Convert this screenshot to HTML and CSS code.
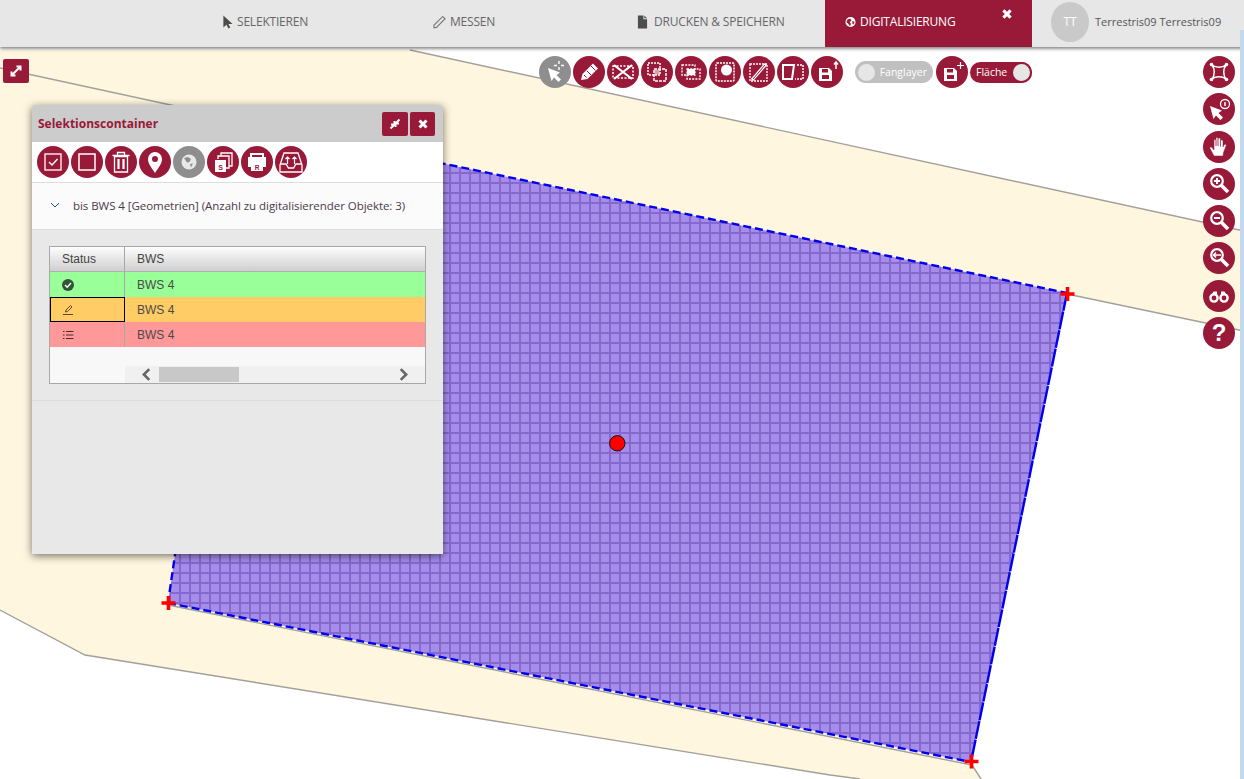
FILE: index.html
```html
<!DOCTYPE html>
<html lang="de">
<head>
<meta charset="utf-8">
<title>Digitalisierung</title>
<link rel="stylesheet" href="styles.css">
</head>
<body>
<div class="app">
  <svg class="map" viewBox="0 0 1244 779" width="1244" height="779">
    <defs>
      <pattern id="hatch" width="10" height="10" patternUnits="userSpaceOnUse" patternTransform="translate(1 4)">
        <rect width="10" height="10" fill="#a68de9"/>
        <rect x="8" width="2.2" height="10" fill="#8569cf"/>
        <rect y="8" width="10" height="2.2" fill="#8569cf"/>
      </pattern>
    </defs>
    <path d="M0 50H410L1244 231V331L1067 294L972 765L981 779H860L830 775L85 655L0 610Z" fill="#fff6df"/>
    <path d="M410 50L1244 231M1244 331L1067 294M168 605L972 765L981 779M860 779L830 775L85 655L0 610M0 68L240 120" fill="none" stroke="#a3a09a" stroke-width="1.400"/>
    <path d="M238 121L1067 293L971 762L168 603Z" fill="url(#hatch)"/>
    <path d="M238 121L1067 293M168 603L971 762M238 121L168 603" fill="none" stroke="#0000ee" stroke-width="2.400" stroke-dasharray="8 4"/>
    <path d="M1067 293L971 762" fill="none" stroke="#0000ee" stroke-width="2.400" stroke-dasharray="18 1"/>
    <circle cx="617.3" cy="443.3" r="7.7" fill="#f00" stroke="#111" stroke-width="1"/>
    <path d="M1060.500 294H1074.500M1067.500 287V301M161.500 603H175.500M168.500 596V610M964.500 761.500H978.500M971.500 754.500V768.500" fill="none" stroke="#f00" stroke-width="3.600"/>
  </svg>

  <header class="topbar">
    <nav class="tabs">
      <a class="tab tab-sel">
        <svg class="tab-ic" viewBox="0 0 12 14"><path d="M1.500 0V13L4.800 10L7 14L9 13L7 9.200H11.500Z" fill="#4d4d4d"/></svg>
        SELEKTIEREN</a>
      <a class="tab tab-mes">
        <svg class="tab-ic tab-ic-wide" viewBox="0 0 14 14"><path d="M1 10.500L10.500 1L13 3.500L3.500 13L1 13Z" fill="none" stroke="#777" stroke-width="1.200"/></svg>
        MESSEN</a>
      <a class="tab tab-dru">
        <svg class="tab-ic" viewBox="0 0 12 14"><path d="M1 0H7V4H11V14H1ZM8 0L11 3H8Z" fill="#4d4d4d"/></svg>
        DRUCKEN &amp; SPEICHERN</a>
      <a class="tab tab-active">
        <svg class="tab-ic" viewBox="0 0 12 12"><circle cx="6" cy="6" r="5.500" fill="#fff"/><path d="M3 3L6 2.500L7 4.500L5 6L6.500 8L5.500 10.500L3.500 8L1.500 6ZM8 5L10.500 6L9 9L8 7.500Z" fill="#981a38"/></svg>
        DIGITALISIERUNG
        <svg class="tab-close" viewBox="0 0 10 10"><path d="M2 2L8 8M8 2L2 8" stroke="#fff" stroke-width="2.600"/></svg>
      </a>
    </nav>
    <div class="user">
      <span class="avatar">TT</span>
      <span class="user-name">Terrestris09 Terrestris09</span>
    </div>
  </header>

  <button class="square-btn map-expand">
    <svg viewBox="0 0 14 14"><path d="M3 11L11 3M7.500 2.500H11.500V6.500M2.500 7.500V11.500H6.500" fill="none" stroke="#fff" stroke-width="2"/></svg>
  </button>

  <div class="draw-tools">
    <button class="round grey"><svg viewBox="0 0 32 32"><path d="M9 12L12.500 25L15 21.500L19.500 26L22 23.500L17.500 19L21 16.500Z" fill="#fff"/><path d="M20 5V8M20 11V14M15 9.500H18M22 9.500H25" stroke="#fff" stroke-width="1.400"/></svg></button>
    <button class="round"><svg viewBox="0 0 32 32"><path d="M8 24L9.500 18L20 7.500L25 12.500L14.500 23Z" fill="#fff"/><path d="M18 10L22.500 14.500M11 19L13.500 21.500M14 15L18 19" stroke="#981a38" stroke-width="1"/></svg></button>
    <button class="round"><svg viewBox="0 0 32 32"><rect x="6" y="10" width="20" height="12" fill="none" stroke="#fff" stroke-width="1.500" stroke-dasharray="2 1.500"/><path d="M7 9L25 23M25 9L7 23" stroke="#fff" stroke-width="2.200"/></svg></button>
    <button class="round"><svg viewBox="0 0 32 32"><rect x="7" y="7" width="12" height="12" fill="none" stroke="#fff" stroke-width="1.500" stroke-dasharray="2 1"/><rect x="13" y="13" width="12" height="12" fill="none" stroke="#fff" stroke-width="1.500" stroke-dasharray="3 1"/><rect x="13.500" y="13.500" width="5" height="5" fill="#fff" opacity=".6"/></svg></button>
    <button class="round"><svg viewBox="0 0 32 32"><rect x="7" y="9" width="13" height="10" fill="none" stroke="#fff" stroke-width="1.300" stroke-dasharray="2 1.200"/><rect x="12" y="13" width="13" height="10" fill="none" stroke="#fff" stroke-width="1.300" stroke-dasharray="2 1.200"/><rect x="12" y="13" width="8" height="6" fill="#fff"/></svg></button>
    <button class="round"><svg viewBox="0 0 32 32"><rect x="7" y="7" width="18" height="18" rx="1" fill="none" stroke="#fff" stroke-width="1.500" stroke-dasharray="2 1"/><circle cx="17.500" cy="14" r="5.500" fill="#fff"/></svg></button>
    <button class="round"><svg viewBox="0 0 32 32"><rect x="7" y="8" width="17" height="17" fill="none" stroke="#fff" stroke-width="1.300" stroke-dasharray="2 1"/><path d="M9 24L23 8" stroke="#fff" stroke-width="3.200"/><path d="M10 23L22 9" stroke="#981a38" stroke-width="1"/></svg></button>
    <button class="round"><svg viewBox="0 0 32 32"><path d="M6 9H17L15 23H6Z" fill="none" stroke="#fff" stroke-width="2"/><path d="M20 9H26V23H18" fill="none" stroke="#fff" stroke-width="1.500" stroke-dasharray="2 1"/></svg></button>
    <button class="round"><svg viewBox="0 0 32 32"><path d="M8 12H18L21 15V25H8Z" fill="#fff"/><rect x="11" y="13" width="6" height="3.500" fill="#981a38"/><rect x="11" y="19" width="7" height="4" fill="#981a38"/><path d="M25 6V13M23 8.500L25 6L27 8.500" fill="none" stroke="#fff" stroke-width="1.500"/></svg></button>
    <div class="toggle toggle-off"><span class="knob"></span><span>Fanglayer</span></div>
    <button class="round"><svg viewBox="0 0 32 32"><path d="M8 12H18L21 15V25H8Z" fill="#fff"/><rect x="11" y="13" width="6" height="3.500" fill="#981a38"/><rect x="11" y="19" width="7" height="4" fill="#981a38"/><path d="M24.500 6V13M21 9.500H28" stroke="#fff" stroke-width="1.200"/></svg></button>
    <div class="toggle toggle-on"><span>Fläche</span><span class="knob"></span></div>
  </div>

  <div class="nav-tools">
    <button class="round"><svg viewBox="0 0 32 32"><path d="M9 9C13 12 19 12 23 9C20 13 20 19 23 23C19 20 13 20 9 23C12 19 12 13 9 9Z" fill="none" stroke="#fff" stroke-width="1.500"/><g fill="#fff"><circle cx="8.500" cy="8.500" r="1.800"/><circle cx="23.500" cy="8.500" r="1.800"/><circle cx="8.500" cy="23.500" r="1.800"/><circle cx="23.500" cy="23.500" r="1.800"/></g></svg></button>
    <button class="round"><svg viewBox="0 0 32 32"><path d="M7 13L10.500 26L13 22.500L17.500 27L20 24.500L15.500 20L19 17.500Z" fill="#fff"/><circle cx="22" cy="11" r="4.500" fill="none" stroke="#fff" stroke-width="1.300"/><path d="M22 9V13" stroke="#fff" stroke-width="1.500"/></svg></button>
    <button class="round"><svg viewBox="0 0 32 32"><path d="M11 25L7 17.500C6.500 16 8 15.500 9 16.500L11 19V9.500C11 8 13 8 13 9.500V15V7.500C13 6 15 6 15 7.500V15V8C15 6.500 17.500 6.500 17.500 8V15.500V10C17.500 8.500 20 8.500 20 10V16L21 14C22 12.500 24 13.500 23 15L20.500 21.500L20 25Z" fill="#fff" stroke="#981a38" stroke-width=".5"/></svg></button>
    <button class="round"><svg viewBox="0 0 32 32"><circle cx="14" cy="13" r="5.800" fill="none" stroke="#fff" stroke-width="2.200"/><path d="M18.500 17.500L25 24" stroke="#fff" stroke-width="3.600"/><path d="M11 13H17M14 10V16" stroke="#fff" stroke-width="2"/></svg></button>
    <button class="round"><svg viewBox="0 0 32 32"><circle cx="14" cy="13" r="5.800" fill="none" stroke="#fff" stroke-width="2.200"/><path d="M18.500 17.500L25 24" stroke="#fff" stroke-width="3.600"/><path d="M11 13H17" stroke="#fff" stroke-width="2"/></svg></button>
    <button class="round"><svg viewBox="0 0 32 32"><circle cx="14" cy="13" r="5.800" fill="none" stroke="#fff" stroke-width="2.200"/><path d="M18.500 17.500L25 24" stroke="#fff" stroke-width="3.600"/><path d="M10.500 13H18M13 10.500L10.500 13L13 15.500" fill="none" stroke="#fff" stroke-width="1.500"/></svg></button>
    <button class="round"><svg viewBox="0 0 32 32"><circle cx="11" cy="18" r="3.600" fill="none" stroke="#fff" stroke-width="2.400"/><circle cx="21" cy="18" r="3.600" fill="none" stroke="#fff" stroke-width="2.400"/><path d="M8.500 15L10.500 11.500H14V15H18V11.500H21.500L23.500 15Z" fill="#fff"/></svg></button>
    <button class="round help">?</button>
  </div>

  <section class="panel">
    <div class="panel-head">
      <h2 class="panel-title">Selektionscontainer</h2>
      <button class="square-btn">
        <svg viewBox="0 0 14 14"><path d="M2.500 11.500L6 8M8 6L11.500 2.500M6.500 4V7.500H3M7.500 10V6.500H11" fill="none" stroke="#fff" stroke-width="2"/></svg>
      </button>
      <button class="square-btn">
        <svg viewBox="0 0 14 14"><path d="M3.500 3.500L10.500 10.500M10.500 3.500L3.500 10.500" stroke="#fff" stroke-width="3"/></svg>
      </button>
    </div>
    <div class="panel-tools">
      <button class="round"><svg viewBox="0 0 32 32"><rect x="8" y="8" width="16" height="16" fill="none" stroke="#fff" stroke-width="1.300"/><path d="M12 16L15 19L20.500 13" fill="none" stroke="#fff" stroke-width="1.400"/></svg></button>
      <button class="round"><svg viewBox="0 0 32 32"><rect x="8" y="8" width="16" height="16" fill="none" stroke="#fff" stroke-width="1.500"/></svg></button>
      <button class="round"><svg viewBox="0 0 32 32"><path d="M9.500 10.500H22.500V26H9.500ZM7.500 9.500H24.500M12.500 9V6.500H19.500V9" fill="none" stroke="#fff" stroke-width="1.300"/><path d="M13.500 13V23M18.500 13V23" stroke="#fff" stroke-width="2.200"/></svg></button>
      <button class="round"><svg viewBox="0 0 32 32"><path fill-rule="evenodd" d="M16 27C12 21 9 17.500 9 13A7 7 0 0 1 23 13C23 17.500 20 21 16 27ZM16 10A3 3 0 1 0 16 16A3 3 0 1 0 16 10Z" fill="#fff"/></svg></button>
      <button class="round grey"><svg viewBox="0 0 32 32"><circle cx="16" cy="16" r="7.500" fill="#e8e8e8"/><path d="M11 12L15 11L18 13L16.500 16L14 16.500ZM17 18L20 17.500L18 21.500Z" fill="#8e8e8e"/></svg></button>
      <button class="round"><svg viewBox="0 0 32 32"><path d="M14 10V7H25V20H22" fill="none" stroke="#fff" stroke-width="1.300"/><path d="M11 13V10H22V22H19" fill="none" stroke="#fff" stroke-width="1.300"/><rect x="8" y="14" width="11" height="12" fill="#fff"/><text class="mini" x="13.500" y="23.500">S</text></svg></button>
      <button class="round"><svg viewBox="0 0 32 32"><path d="M10 12V8H22V12" fill="none" stroke="#fff" stroke-width="2"/><path d="M7 11H25V21H22V25H10V21H7Z" fill="#fff"/><text class="mini mini-red" x="16" y="23.500">R</text></svg></button>
      <button class="round"><svg viewBox="0 0 32 32"><path d="M9 7H23L27 19V26H5V19Z" fill="none" stroke="#fff" stroke-width="1.300"/><path d="M6 18H11L13.500 22H18.500L21 18H26" fill="none" stroke="#fff" stroke-width="1.300"/><path d="M12.500 18V11M10.500 13L12.500 11L14.500 13M19.500 11V18M17.500 13L19.500 11L21.500 13" fill="none" stroke="#fff" stroke-width="1.200"/></svg></button>
    </div>
    <div class="acc-head">
      <svg class="chev" viewBox="0 0 10 6"><path d="M1 1L5 5L9 1" fill="none" stroke="#2a4a7a" stroke-width="1"/></svg>
      <span>bis BWS 4 [Geometrien] (Anzahl zu digitalisierender Objekte: 3)</span>
    </div>
    <div class="acc-body">
      <div class="grid">
        <div class="grid-row grid-header">
          <div class="cell cell-status">Status</div>
          <div class="cell">BWS</div>
        </div>
        <div class="grid-row row-green">
          <div class="cell cell-status">
            <svg class="stat-ic" viewBox="0 0 12 12"><circle cx="6" cy="6" r="6" fill="#33533a"/><path d="M3 6L5.200 8.200L9 4" fill="none" stroke="#fff" stroke-width="1.300"/></svg>
          </div>
          <div class="cell">BWS 4</div>
        </div>
        <div class="grid-row row-orange">
          <div class="cell cell-status cell-focus">
            <svg class="stat-ic" viewBox="0 0 12 12"><path d="M3.500 8L4 6L8.500 1.500L10 3L5.500 7.500ZM1 10.500H11" fill="none" stroke="#4a3a20" stroke-width=".9"/></svg>
          </div>
          <div class="cell">BWS 4</div>
        </div>
        <div class="grid-row row-red">
          <div class="cell cell-status">
            <svg class="stat-ic" viewBox="0 0 12 12"><path d="M4 2.500H11.500M4 6H11.500M4 9.500H11.500M1 2.500H2.500M1 6H2.500M1 9.500H2.500" stroke="#4a2a2a" stroke-width="1"/></svg>
          </div>
          <div class="cell">BWS 4</div>
        </div>
        <div class="grid-scroll">
          <svg class="arrow" viewBox="0 0 10 12"><path d="M8 1L3 6L8 11" fill="none" stroke="#666" stroke-width="2.400"/></svg>
          <span class="thumb"></span>
          <svg class="arrow arrow-right" viewBox="0 0 10 12"><path d="M2 1L7 6L2 11" fill="none" stroke="#666" stroke-width="2.400"/></svg>
        </div>
      </div>
    </div>
    <div class="acc-rest"></div>
  </section>
  <div class="edge"></div>
</div>
</body>
</html>
```
FILE: styles.css
```css
* { box-sizing: border-box; }
html, body { margin: 0; padding: 0; }
body { font-family: "Open Sans", "Liberation Sans", sans-serif; overflow: hidden; background: #fff; }
.app { position: relative; width: 1244px; height: 779px; overflow: hidden; }
.map { position: absolute; left: 0; top: 0; display: block; }
.edge { position: absolute; right: 0; top: 30px; bottom: 0; width: 4px; background: #c4d9ee; }

.topbar { position: relative; display: flex; height: 47px; padding-left: 204px; background: #e7e7e7; box-shadow: 0 2px 3px rgba(0,0,0,.45); }
.tabs { display: flex; }
.tab { position: relative; display: flex; align-items: center; gap: 4px; width: 207px; padding: 0 0 4px 18px; font-size: 12px; color: #666; letter-spacing: -.2px; }
.tab-mes { padding-left: 22px; }
.tab-dru { padding-left: 19px; gap: 6px; letter-spacing: -.17px; }
.tab-active { padding-left: 20px; background: #981a38; color: #fff; }
.tab-ic { width: 11px; height: 14px; flex: none; }
.tab-ic-wide { width: 13px; }
.tab-close { position: absolute; right: 19px; top: 8px; width: 12px; height: 12px; }
.user { display: flex; align-items: center; padding: 0 0 4px 19px; }
.avatar { display: flex; align-items: center; justify-content: center; width: 38px; height: 40px; border-radius: 50%; background: #c9c9c9; color: #fff; font-size: 12px; }
.user-name { margin-left: 6px; font-size: 11px; color: #555; }

button { padding: 0; border: 0; font: inherit; }
.round { flex: none; display: block; width: 32px; height: 32px; border-radius: 50%; background: #981a38; }
.round svg { display: block; width: 32px; height: 32px; }
.round.grey { background: #8e8e8e; }
.help { color: #fff; font-family: "Liberation Sans", sans-serif; font-weight: 700; font-size: 24px; line-height: 32px; text-align: center; }
.mini { font-family: "Liberation Sans", sans-serif; font-weight: 700; font-size: 7px; fill: #981a38; text-anchor: middle; }
.mini-red { font-size: 6.500px; }

.square-btn { display: flex; align-items: center; justify-content: center; width: 26px; height: 24px; border-radius: 2px; background: #981a38; }
.square-btn svg { width: 14px; height: 14px; display: block; }
.map-expand { position: absolute; left: 3px; top: 59px; }

.draw-tools { position: absolute; left: 539px; top: 56px; display: flex; align-items: center; gap: 2px; }
.toggle { display: flex; align-items: center; justify-content: space-between; height: 22px; border-radius: 11px; font-size: 10.500px; color: #fff; }
.toggle-off { width: 78px; margin: 0 1px 0 10px; padding: 0 6px 0 1px; background: #c0c0c0; }
.toggle-on { width: 62px; height: 21px; padding-left: 6px; background: #981a38; }
.knob { display: block; width: 21px; height: 21px; border-radius: 50%; background: #e6e6e6; border: 2px solid #c0c0c0; }
.toggle-on .knob { border-color: #981a38; }

.nav-tools { position: absolute; left: 1203px; top: 56px; display: flex; flex-direction: column; gap: 5.300px; }

.panel { position: absolute; left: 32px; top: 105px; width: 411px; height: 449px; display: flex; flex-direction: column; background: #e8e8e8; border-radius: 3px 3px 0 0; box-shadow: 0 2px 8px rgba(0,0,0,.55); }
.panel-head { display: flex; align-items: center; gap: 2px; height: 37px; padding: 0 8px 0 6px; background: #cccccc; border-radius: 3px 3px 0 0; }
.panel-head .square-btn:last-child { width: 25px; }
.panel-head .square-btn { height: 24px; }
.panel-title { flex: 1; margin: 0; font-size: 12px; font-weight: 700; color: #981a38; }
.panel-tools { display: flex; gap: 2px; height: 40px; padding: 4px 5px; background: #fff; }
.acc-head { display: flex; align-items: center; gap: 13px; height: 48px; padding: 0 0 2px 18px; background: #fbfbfb; border-top: 1px solid #ddd; border-bottom: 1px solid #ddd; font-size: 11.500px; letter-spacing: -.05px; color: #4a3a4a; }
.chev { width: 10px; height: 6px; flex: none; }
.acc-body { height: 171px; padding: 16px 17px 17px; background: #e8e8e8; border-bottom: 1px solid #ddd; }
.acc-rest { flex: 1; }

.grid { height: 138px; border: 1px solid #a8a8a8; background: #f8f8f8; font-family: "Liberation Sans", sans-serif; font-size: 12px; color: #4a4a4a; }
.grid-row { display: flex; height: 25px; }
.grid-header { background: linear-gradient(#fdfdfd, #cfcfcf); border-bottom: 1px solid #b0b0b0; color: #444; }
.cell { display: flex; align-items: center; padding-left: 12px; flex: 1; }
.cell-status { flex: none; width: 75px; border-right: 1px solid #a8a8a8; }
.row-green { background: #99ff99; }
.row-orange { background: #ffcc66; }
.row-red { background: #ff9999; }
.cell-focus { border: 2px solid #000; border-width: 1.500px; padding-left: 11px; }
.stat-ic { width: 12px; height: 12px; }
.grid-scroll { display: flex; align-items: center; height: 17px; margin: 19px 0 0 75px; padding-left: 15px; background: #f0f0f0; }
.arrow { width: 12px; height: 13px; flex: none; }
.arrow-right { margin-left: auto; margin-right: 15px; }
.thumb { width: 80px; height: 15px; margin-left: 7px; background: #c8c8c8; }
```
